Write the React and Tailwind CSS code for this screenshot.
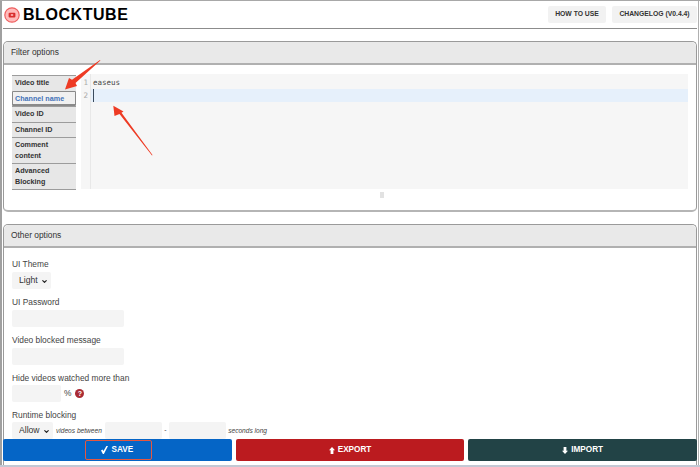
import React from "react";
import { ChevronDown } from "lucide-react";

const tabs = [
  { label: "Video title" },
  { label: "Channel name", active: true },
  { label: "Video ID" },
  { label: "Channel ID" },
  { label: "Comment content" },
  { label: "Advanced Blocking" },
];

const Field = ({ className }) => <div className={`bg-[#f4f4f4] rounded-[2px] ${className}`} />;

const Select = ({ label, className }) => (
  <div className={`relative h-[17px] bg-[#f4f4f4] rounded-[2px] ${className}`}>
    <select className="appearance-none w-full h-full pl-[7px] text-[8.6px] text-[#333]">
      <option>{label}</option>
    </select>
    <ChevronDown size={7} strokeWidth={4} className="absolute right-[3px] top-[6px] text-[#222]" />
  </div>
);

const Panel = ({ title, className, children }) => (
  <section className={`mx-[3px] rounded-[5px] border border-[#9a9a9a] border-b-2 border-b-[#b5b5b5] ${className}`}>
    <h2 className="h-[23px] pl-[7px] flex items-center bg-[#e9e9e9] border-b-2 border-[#b0b0b0] rounded-t-[5px] text-[8.4px] text-[#333]">
      {title}
    </h2>
    {children}
  </section>
);

const App = () => {
  return (
    <div className="relative w-[700px] h-[467px] overflow-hidden bg-white border-t border-[#a8a8a8] font-['Liberation_Sans',sans-serif] text-[#333]">
      <div className="absolute inset-y-0 left-0 w-[2px] bg-[#a0a0a0]" />
      <div className="absolute inset-y-0 right-[1px] w-[1px] bg-[#b0b0b0]" />
      <div className="absolute inset-x-0 bottom-0 h-[2px] bg-[#c4c8d4]" />

      {/* Header */}
      <header className="h-[28px] mx-[3px] flex items-center justify-between border-b border-[#8c8c8c]">
        <div className="flex items-center gap-[3px] pl-[1px]">
          <svg width="16" height="16" viewBox="0 0 16 16">
            <circle cx="8" cy="8" r="7.2" fill="#fbb" stroke="#ee5f5f" strokeWidth="1.2" />
            <rect x="4.6" y="5.8" width="6.8" height="4.6" rx="1" fill="#d92f2f" />
            <rect x="6.8" y="7.2" width="2.4" height="1.6" fill="#fbb" />
          </svg>
          <span className="text-[16px] leading-none font-bold tracking-[0.55px] text-black">BLOCKTUBE</span>
        </div>
        <nav className="flex items-center gap-[6px]">
          <button className="h-[17px] w-[58px] bg-[#f2f2f2] rounded-[2px] text-[6.8px] font-bold text-[#333]">HOW TO USE</button>
          <button className="h-[17px] w-[85px] bg-[#f2f2f2] rounded-[2px] text-[6.8px] font-bold text-[#333]">CHANGELOG (V0.4.4)</button>
        </nav>
      </header>

      {/* Filter options */}
      <Panel title="Filter options" className="mt-[12px] h-[171px]">
        <div className="flex pl-[8px] pr-[8px] pt-[9px]">
          <ul className="w-[64px] shrink-0 mt-[1px]">
            {tabs.map((t) => (
              <li
                key={t.label}
                className={
                  t.active
                    ? "px-[2px] pt-[2px] bg-[#f0f0f0] border border-[#8a8a8a] border-b-2 rounded-[1px] text-[#4472b8] text-[7.2px] leading-[10.5px] font-bold"
                    : "px-[3px] py-[2px] bg-[#e7e7e7] border-t border-[#9c9c9c] last:border-b text-[#333] text-[7.2px] leading-[10.5px] font-bold"
                }
              >
                {t.label}
              </li>
            ))}
          </ul>
          <div className="ml-[5px] flex-1">
            <div className="h-[115px] bg-[#f6f6f6] flex font-['DejaVu_Sans_Mono',monospace] text-[7.5px]">
              <div className="w-[10px] shrink-0 border-r border-[#e8e8e8] text-right pr-[2px] text-[#aaa] leading-[13px] pt-[2px]">
                <div>1</div>
                <div>2</div>
              </div>
              <div className="flex-1 pt-[2px] leading-[13px]">
                <div className="pl-[2px] text-[#444]">easeus</div>
                <div className="h-[13px] bg-[#e6f0fb] pl-[2px]">
                  <div className="w-[1px] h-[13px] bg-[#3a4a5c]" />
                </div>
              </div>
            </div>
            <div className="ml-[299px] mt-[3px] w-[4px] h-[6px] bg-[#e2e2e2]" />
          </div>
        </div>
      </Panel>

      {/* Other options */}
      <Panel title="Other options" className="mt-[12px] h-[300px]">
        <div className="px-[8px] pt-[11px] text-[8.4px] text-[#444]">
          <label className="block leading-[11px]">UI Theme</label>
          <Select label="Light" className="mt-[2px] w-[39px]" />
          <label className="block leading-[11px] mt-[8px]">UI Password</label>
          <Field className="mt-[2px] h-[17px] w-[112px]" />
          <label className="block leading-[11px] mt-[8px]">Video blocked message</label>
          <Field className="mt-[2px] h-[17px] w-[112px]" />
          <label className="block leading-[11px] mt-[8px]">Hide videos watched more than</label>
          <div className="mt-[1px] flex items-center gap-[3px]">
            <Field className="h-[17px] w-[49px]" />
            <span>%</span>
            <span className="ml-[1px] w-[9px] h-[9px] rounded-full bg-[#a92b35] text-white text-[7px] leading-[9px] font-bold text-center">?</span>
          </div>
          <label className="block leading-[11px] mt-[8px]">Runtime blocking</label>
          <div className="mt-[1px] flex items-center">
            <Select label="Allow" className="w-[41px]" />
            <span className="ml-[3px] text-[6.6px] italic">videos between</span>
            <Field className="ml-[3px] h-[17px] w-[57px]" />
            <span className="mx-[2.5px] text-[7px]">-</span>
            <Field className="h-[17px] w-[57px]" />
            <span className="ml-[2px] text-[6.6px] italic">seconds long</span>
          </div>
        </div>
      </Panel>

      {/* Sticky action bar */}
      <div className="absolute left-[3px] right-[3px] top-[438px] h-[22px] flex gap-[4px] text-[8.2px] font-bold text-white">
        <button className="relative flex-1 flex items-center justify-center gap-[3px] rounded-[2px] bg-[#0565c6]">
          <svg width="7" height="8" viewBox="0 0 7 8">
            <polygon points="0,4.5 1.4,3.4 2.5,5 5.4,0 7,0 2.9,8 1.9,8" fill="white" />
          </svg>
          SAVE
          <span className="absolute left-[82px] top-[1px] w-[67px] h-[20px] rounded-[2px] border border-[#e5573f]" />
        </button>
        <button className="flex-1 flex items-center justify-center gap-[3px] rounded-[2px] bg-[#bb1b1f]">
          <svg width="6" height="7" viewBox="0 0 6 7">
            <polygon points="3,0 6,3.2 4.4,3.2 4.4,7 1.6,7 1.6,3.2 0,3.2" fill="white" />
          </svg>
          EXPORT
        </button>
        <button className="flex-1 flex items-center justify-center gap-[3px] rounded-[2px] bg-[#224346]">
          <svg width="6" height="7" viewBox="0 0 6 7">
            <polygon points="3,7 6,3.8 4.4,3.8 4.4,0 1.6,0 1.6,3.8 0,3.8" fill="white" />
          </svg>
          IMPORT
        </button>
      </div>

      {/* Annotation arrows */}
      <svg className="absolute left-0 top-[-1px] pointer-events-none" width="700" height="467">
        <polygon points="100,60 100.4,60.6 75.5,83 77,86 65,89.5 69,78 72,79.8" fill="#ee3b24" />
        <polygon points="152.5,155 152,155.5 119.5,114 114.5,116 113.3,105.7 123.5,111.5 121.5,112.8" fill="#ee3b24" />
      </svg>
    </div>
  );
};

export default App;
